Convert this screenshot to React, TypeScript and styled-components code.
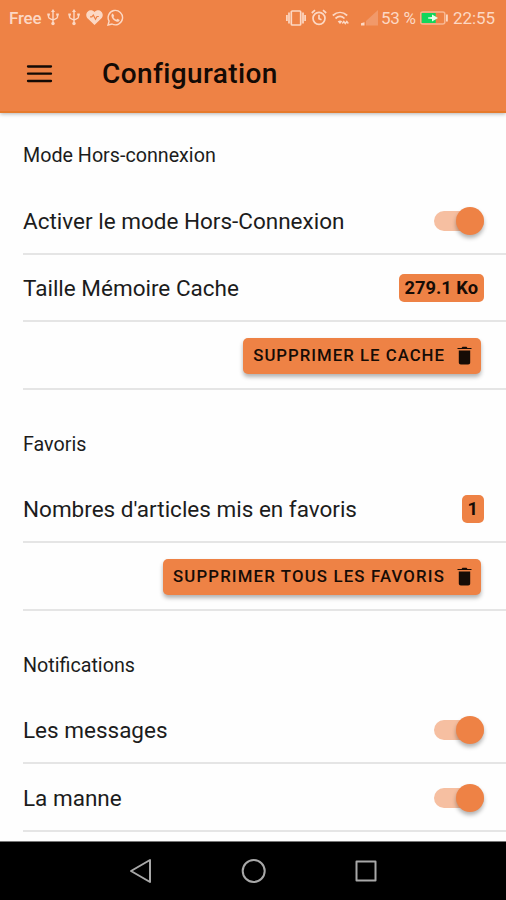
import React from "react";
import styled, { createGlobalStyle } from "styled-components";

const ORANGE = "#ee8245";

const GlobalStyle = createGlobalStyle`
  * { box-sizing: border-box; }
  body { margin: 0; background: #fff; font-family: Roboto, "Liberation Sans", sans-serif; }
`;

const Screen = styled.div`
  width: 506px;
  height: 900px;
  display: flex;
  flex-direction: column;
  overflow: hidden;
  background: #fefefe;
  color: #1c1c1c;
`;

const Header = styled.header`
  flex: none;
  height: 113px;
  background: ${ORANGE};
  border-bottom: 2px solid #e67a2c;
  box-shadow: 0 1px 4px rgba(0, 0, 0, 0.3);
`;

const StatusBar = styled.div`
  height: 35px;
  display: flex;
  align-items: center;
  justify-content: space-between;
  padding: 0 10px 0 9px;
  font-size: 17px;
  color: #fcd8c4;
  svg { display: block; flex: none; }
`;

const StatusGroup = styled.div<{ $gap: number }>`
  display: flex;
  align-items: center;
  gap: ${(p) => p.$gap}px;
`;

const Carrier = styled.span`
  width: 34px;
  font-weight: 500;
  letter-spacing: -0.2px;
`;

const UsbPair = styled.span`
  display: flex;
  gap: 9px;
  margin-right: 2px;
`;

const SignalLevel = styled.span`
  display: flex;
  align-items: center;
  gap: 2px;
  margin-left: 7px;
`;

const Percent = styled.span`
  width: 34px;
  white-space: nowrap;
  letter-spacing: -0.3px;
`;

const Clock = styled.span`
  width: 43px;
  white-space: nowrap;
  letter-spacing: -0.1px;
`;

const Toolbar = styled.div`
  height: 78px;
  display: flex;
  align-items: center;
  padding-left: 26px;
  gap: 49px;
  color: #130a05;
  svg { display: block; }
`;

const Title = styled.h1`
  margin: 0;
  font-size: 28px;
  line-height: 34px;
  font-weight: 500;
  letter-spacing: 0.4px;
`;

const Content = styled.main`
  flex: 1;
  min-height: 0;
  overflow: hidden;
`;

const Section = styled.section`
  padding-left: 23px;
  & + & { margin-top: 12px; }
`;

const SectionLabel = styled.h2`
  margin: 0;
  height: 74px;
  padding-top: 31px;
  font-size: 19.7px;
  line-height: 24px;
  font-weight: 400;
`;

const Row = styled.div<{ $inset?: boolean }>`
  height: 67.5px;
  display: flex;
  align-items: center;
  justify-content: ${(p) => (p.$inset ? "flex-end" : "space-between")};
  padding-top: 2px;
  padding-right: ${(p) => (p.$inset ? 25 : 22)}px;
  border-bottom: 2px solid #e5e5e5;
`;

const RowLabel = styled.span`
  font-size: 22.5px;
  line-height: 28px;
`;

const Badge = styled.span`
  height: 28px;
  padding: 0 6px;
  border-radius: 5px;
  background: ${ORANGE};
  color: #160c06;
  font-size: 18.3px;
  line-height: 27px;
  font-weight: 700;
`;

const Action = styled.button<{ $tracking: number }>`
  height: 36px;
  display: flex;
  align-items: center;
  gap: 12px;
  padding: 0 9px 0 10px;
  border: 0;
  border-radius: 5px;
  background: ${ORANGE};
  box-shadow: 0 3px 4px rgba(0, 0, 0, 0.3);
  color: #160c06;
  font: 500 16.8px/34px Roboto, sans-serif;
  letter-spacing: ${(p) => p.$tracking}px;
  text-transform: uppercase;
  white-space: nowrap;
`;

const ActionText = styled.span`
  height: 36px;
`;

const Track = styled.span`
  width: 50px;
  height: 20px;
  display: flex;
  align-items: center;
  justify-content: flex-end;
  border-radius: 10px;
  background: #f6bfa1;
`;

const Knob = styled.span`
  width: 28px;
  height: 28px;
  border-radius: 50%;
  background: ${ORANGE};
  box-shadow: 0 3px 4px rgba(0, 0, 0, 0.3);
`;

const NavBar = styled.nav`
  flex: none;
  height: 59px;
  display: flex;
  align-items: center;
  justify-content: center;
  gap: 88px;
  background: #000;
  border-top: 1px solid #777;
  color: #a8a8a8;
  svg { display: block; }
`;

const Usb = () => (
  <svg width="12" height="17" viewBox="0 0 12 17" fill="none" stroke="currentColor" strokeWidth="1.4">
    <path d="M6 2v12M1.500 5.500V8c0 2 4.500 2 4.500 3.500M10.500 5.500V8c0 2-4.500 2-4.500 3.500" />
    <path d="M6 0 8 3H4zM0.300 4.500h2.600v2H0.300zM9.200 4.500h2.600v2H9.200z" fill="currentColor" stroke="none" />
    <circle cx="6" cy="14.500" r="1.700" fill="currentColor" stroke="none" />
  </svg>
);

const Heart = () => (
  <svg width="17" height="15" viewBox="0 0 17 15">
    <path d="M8.500 15 2 8.800C-3.200 3.400 4.500-3 8.500 2c4-5 11.700 1.400 6.500 6.800z" fill="currentColor" />
    <path d="M4 6.800h1.800L7.300 5l2.200 4.200L11 6.500h1.800" fill="none" stroke={ORANGE} strokeWidth="1.200" />
  </svg>
);

const WhatsApp = () => (
  <svg width="17" height="17" viewBox="0 0 17 17" fill="none" stroke="currentColor" strokeWidth="1.400">
    <path d="M1 16 2.100 12.200A7.200 7.200 0 1 1 5 15z" />
    <path d="M5.900 4.500 7.200 6.900 6.400 8c.7 1.400 1.600 2.200 2.900 2.700l1.200-1 2.200 1.300c-.3 1.500-1.500 2-2.900 1.700C7 12 4.700 9.500 4.400 6.800c0-1.200.6-2 1.500-2.300z" fill="currentColor" stroke="none" />
  </svg>
);

const Vibrate = () => (
  <svg width="20" height="16" viewBox="0 0 20 16" fill="none" stroke="currentColor" strokeWidth="1.700">
    <rect x="5.300" y="1" width="9.400" height="14" rx="1" />
    <path d="M3 2.500v11M.9 5v6M17 2.500v11M19.100 5v6" />
  </svg>
);

const Alarm = () => (
  <svg width="16" height="17" viewBox="0 0 16 17" fill="none" stroke="currentColor" strokeWidth="1.700">
    <circle cx="8" cy="9.300" r="6" />
    <path d="M8 5.700v4l2.500 1M.8 4 4 1.200M15.200 4 12 1.200" />
  </svg>
);

const Wifi = () => (
  <svg width="17" height="14" viewBox="0 0 17 14" fill="none" stroke="currentColor" strokeWidth="1.700">
    <path d="M.8 4.500c4.400-4 10-4 14.400 0M3.500 7.500c2.800-2.500 6.300-2.500 9 0" />
    <path d="m8 13-2.300-2.500c1.500-1.300 3.200-1.300 4.600 0z" fill="currentColor" stroke="none" />
    <path d="m10.300 12.500 1.500-2 1.500 2 1.500-2 1.500 2" strokeWidth="1.400" />
  </svg>
);

const Signal = () => (
  <svg width="18" height="16" viewBox="0 0 18 16">
    <path d="M17 0v15.500H5V11z" fill="#f1996a" />
    <path d="M3.500 12.200v3.300H0v-2.300z" fill="currentColor" />
  </svg>
);

const Battery = () => (
  <svg width="28" height="14" viewBox="0 0 28 14">
    <rect x=".8" y="1" width="24" height="12" rx="2" fill="none" stroke="#f8b792" strokeWidth="1.500" />
    <rect x="1.700" y="2" width="14" height="10" fill="#12d65b" />
    <path d="M26 3.500h1.800v7H26z" fill="currentColor" />
    <path d="M8 6.400 12 6V3.500L18 7l-6 3.500V8l-4-.4z" fill="#e9ffe9" />
  </svg>
);

const Menu = () => (
  <svg width="27" height="18" viewBox="0 0 27 18" stroke="currentColor" strokeWidth="2.300" strokeLinecap="round">
    <path d="M2 1.500h23M2 8.700h23M2 16h23" />
  </svg>
);

const Trash = () => (
  <svg width="15" height="19" viewBox="0 0 15 19" fill="currentColor">
    <path d="M1.800 4.500h11.400v12c0 1.200-.8 2-2 2H3.800c-1.200 0-2-.8-2-2z" />
    <path d="M.5 1.900h4L5.500.7h4l1 1.200h4v1.200H.5z" />
  </svg>
);

const Back = () => (
  <svg width="24" height="26" viewBox="0 0 24 26" fill="none" stroke="currentColor" strokeWidth="2" strokeLinejoin="round">
    <path d="M2 13 21 2v22z" />
  </svg>
);

const Home = () => (
  <svg width="26" height="26" viewBox="0 0 26 26" fill="none" stroke="currentColor" strokeWidth="2">
    <circle cx="12.700" cy="13" r="11" />
  </svg>
);

const Recents = () => (
  <svg width="22" height="22" viewBox="0 0 22 22" fill="none" stroke="currentColor" strokeWidth="2" strokeLinejoin="round">
    <path d="M1.500 1.500h19v19h-19z" />
  </svg>
);

const Switch = () => (
  <Track role="switch" aria-checked="true">
    <Knob />
  </Track>
);

const DeleteButton = ({ label, tracking }: { label: string; tracking: number }) => (
  <Action $tracking={tracking}>
    <ActionText>{label}</ActionText>
    <Trash />
  </Action>
);

export default function App() {
  return (
    <>
      <GlobalStyle />
      <Screen>
        <Header>
          <StatusBar>
            <StatusGroup $gap={4}>
              <Carrier>Free</Carrier>
              <UsbPair>
                <Usb />
                <Usb />
              </UsbPair>
              <Heart />
              <WhatsApp />
            </StatusGroup>
            <StatusGroup $gap={5}>
              <Vibrate />
              <Alarm />
              <Wifi />
              <SignalLevel>
                <Signal />
                <Percent>53 %</Percent>
              </SignalLevel>
              <Battery />
              <Clock>22:55</Clock>
            </StatusGroup>
          </StatusBar>
          <Toolbar>
            <Menu />
            <Title>Configuration</Title>
          </Toolbar>
        </Header>
        <Content>
          <Section>
            <SectionLabel>Mode Hors-connexion</SectionLabel>
            <Row>
              <RowLabel>Activer le mode Hors-Connexion</RowLabel>
              <Switch />
            </Row>
            <Row>
              <RowLabel>Taille Mémoire Cache</RowLabel>
              <Badge>279.1 Ko</Badge>
            </Row>
            <Row $inset>
              <DeleteButton label="Supprimer le cache" tracking={1} />
            </Row>
          </Section>
          <Section>
            <SectionLabel>Favoris</SectionLabel>
            <Row>
              <RowLabel>Nombres d'articles mis en favoris</RowLabel>
              <Badge>1</Badge>
            </Row>
            <Row $inset>
              <DeleteButton label="Supprimer tous les favoris" tracking={1.15} />
            </Row>
          </Section>
          <Section>
            <SectionLabel>Notifications</SectionLabel>
            <Row>
              <RowLabel>Les messages</RowLabel>
              <Switch />
            </Row>
            <Row>
              <RowLabel>La manne</RowLabel>
              <Switch />
            </Row>
          </Section>
        </Content>
        <NavBar>
          <Back />
          <Home />
          <Recents />
        </NavBar>
      </Screen>
    </>
  );
}
